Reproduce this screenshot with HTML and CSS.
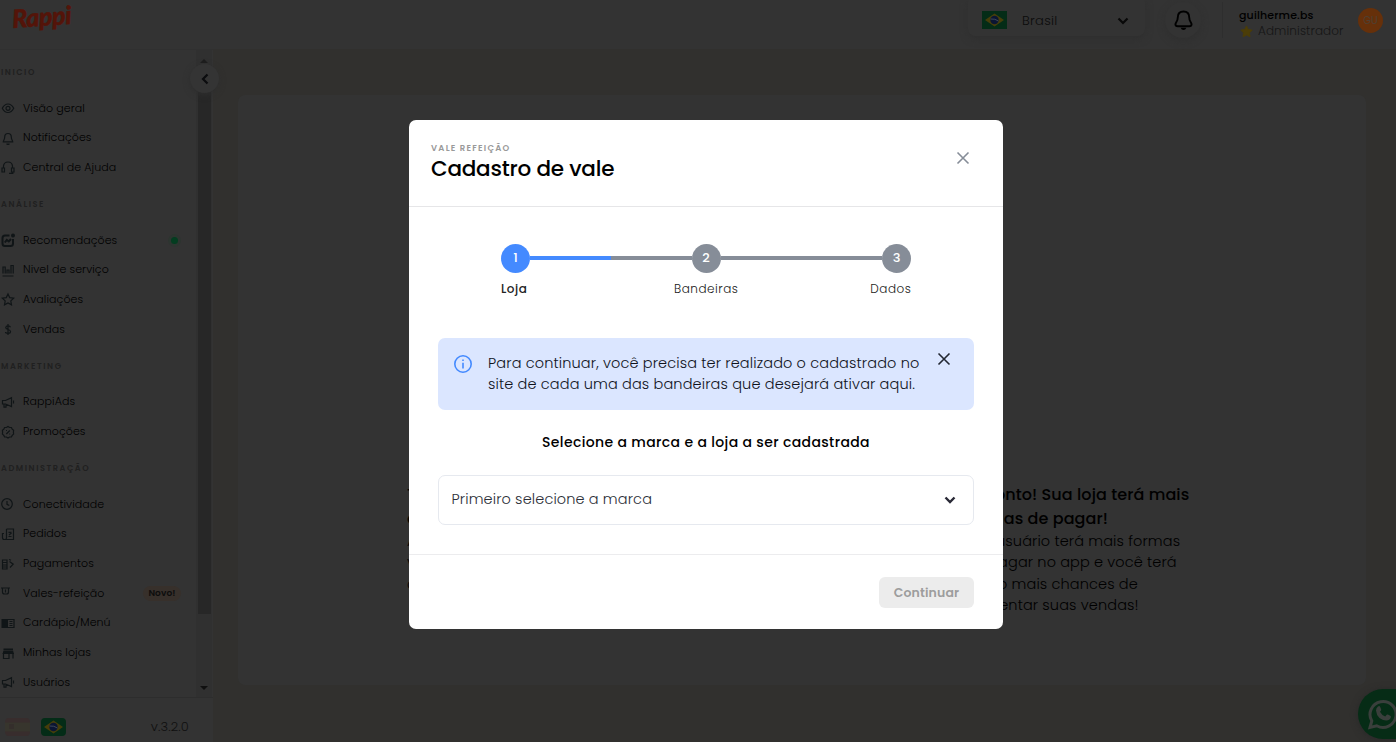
FILE: index.html
```html
<!DOCTYPE html>
<html lang="pt-BR">
<head>
<meta charset="utf-8">
<title>Cadastro de vale</title>
<link rel="stylesheet" href="styles.css">
</head>
<body>
<svg class="defs" aria-hidden="true">
  <symbol id="flag-br" viewBox="0 0 25 18"><rect width="25" height="18" fill="#042c17"/><path d="M12.500 2.500 22 9l-9.500 6.500L3 9z" fill="#463e0a"/><circle cx="12.500" cy="9" r="4.200" fill="#0b1533"/><path d="M8.600 8q4.500-.5 7.800 2" stroke="#3f4858" fill="none"/></symbol>
  <symbol id="mega" viewBox="0 0 14 14"><path d="M1.500 5.500h3L10.500 2.800v8.700L4.500 9h-3zM3 9.200v3h2v-2.500M12.500 5.500v3"/></symbol>
  <symbol id="bell" viewBox="0 0 14 14"><path d="M7 2.500c-2.200 0-3.300 1.500-3.300 3.500 0 3-1.400 3.300-1.400 4.800h9.400c0-1.500-1.400-1.800-1.400-4.800 0-2-1.100-3.500-3.300-3.500zM5.500 12.800q1.500 1.200 3 0"/></symbol>
  <symbol id="chev" viewBox="0 0 12 8"><path d="M1.500 1.500 6 6l4.500-4.500"/></symbol>
</svg>

<header class="topbar">
  <div class="logo">Rappi</div>
  <div class="country"><svg class="flag"><use href="#flag-br"/></svg><span>Brasil</span><svg class="chev"><use href="#chev"/></svg></div>
  <div class="bell"><svg viewBox="0 0 20 22"><path d="M10 1.500c-4 0-6 2.500-6 6 0 4.500-2.500 5.500-2.500 7.500 0 1.500 1 2 2.500 2h12c1.500 0 2.500-.5 2.500-2 0-2-2.500-3-2.500-7.500 0-3.500-2-6-6-6z"/><path class="solid" d="M7 18.500h6q-.8 2.500-3 2.500t-3-2.500z"/></svg></div>
  <div class="user">
    <div class="who"><b>guilherme.bs</b><span><svg class="star" viewBox="0 0 14 14"><path d="M7 1l1.900 3.900 4.200.6-3 3 .7 4.200L7 10.700l-3.800 2 .7-4.200-3-3 4.200-.6z"/></svg><em>Administrador</em></span></div>
    <div class="avatar">GU</div>
  </div>
</header>

<div class="shell">
  <aside class="side">
    <div class="scroll">
      <nav class="menu">
        <h4>INICIO</h4>
        <a><svg viewBox="0 0 14 14"><path d="M1.300 7.300q2.200-4.300 5.700-4.300t5.700 4.300q-2.200 4.200-5.700 4.200T1.300 7.300z"/><circle cx="7" cy="7.300" r="2"/></svg><span>Visão geral</span></a>
        <a><svg><use href="#bell"/></svg><span>Notificações</span></a>
        <a><svg viewBox="0 0 14 14"><path d="M2.500 7.500V6Q3 2 7 2t4.500 4v1.500M1 8h2.500v4H1zM10.500 8H13v4h-2.500zM11.800 12v1.300H8"/></svg><span>Central de Ajuda</span></a>
        <h4>ANÁLISE</h4>
        <a><svg class="heavy" viewBox="0 0 14 14"><path d="M8.500 2.500H4Q1.500 2.500 1.500 5v5.500Q1.500 13 4 13h5.500Q12 13 12 10.500V6M3.800 9.500l2-2.500 2 1.500L10 6"/><circle cx="12" cy="2.500" r="1"/></svg><span>Recomendações</span><i class="live"></i></a>
        <a><svg viewBox="0 0 14 14"><path d="M2 10.500V4h2.200v6.500M6 10.500V7h2v3.500M10 10.500V2.500h2.200v8M1.500 13h11"/></svg><span>Nivel de serviço</span></a>
        <a><svg viewBox="0 0 14 14"><path d="M7 2l1.700 3.600 4 .5-2.900 2.800.7 3.900L7 11l-3.500 1.800.7-3.900-2.900-2.800 4-.5z"/></svg><span>Avaliações</span></a>
        <a><svg viewBox="0 0 14 14"><path d="M9.500 5.300Q9 3.800 7 3.800T4.700 5.600q0 1.400 2.300 1.900t2.500 1.900q0 1.900-2.500 1.900T4.500 9.900M7 2v11"/></svg><span>Vendas</span></a>
        <h4>MARKETING</h4>
        <a><svg><use href="#mega"/></svg><span>RappiAds</span></a>
        <a><svg viewBox="0 0 14 14"><path d="M7 1.500l1.600 1 1.800 0 .8 1.600 1.400 1.200-.2 1.900.2 1.900-1.400 1.300-.8 1.600H8.600L7 13l-1.600-1H3.600l-.8-1.600-1.400-1.300.2-1.900-.2-1.900 1.400-1.200.8-1.600h1.800zM5.300 9l3.500-3.500M5 5.500h1M8.200 9h1"/></svg><span>Promoções</span></a>
        <h4>ADMINISTRAÇÃO</h4>
        <a><svg viewBox="0 0 14 14"><circle cx="6" cy="7" r="5.300"/><path d="M6 4v3.300l2.300 1.200"/></svg><span>Conectividade</span></a>
        <a><svg viewBox="0 0 14 14"><path d="M5.500 2h7v10.500H3.200q-1.700 0-1.700-2V6.500h1.500M5.500 2v9q0 1.500-1.500 1.500M7.500 5.300h3M7.500 9.500h3M8 8l2.500-2"/></svg><span>Pedidos</span></a>
        <a><svg viewBox="0 0 14 14"><path d="M1.500 3h4.500v9H1.500zM1.500 5.500H6M1.500 8H6M1.500 10H6M8.500 4.500 12.200 7.200 9 10.500M8 2.500l2 .8"/></svg><span>Pagamentos</span></a>
        <a><svg viewBox="0 0 14 14"><path d="M0 2h9M1.500 2v4q0 2 2 2h2q2 0 2-2V2M4.500 3.500v3"/></svg><span>Vales-refeição</span><i class="new">Novo!</i></a>
        <a><svg viewBox="0 0 14 14"><path class="solid" d="M.5 3h6.500v9H.5z"/><path d="M7 3.500h6v8H7M8.500 5.500h3M8.500 7.500h3M8.500 9.500h3"/></svg><span>Cardápio/Menú</span></a>
        <a><svg viewBox="0 0 14 14"><path class="solid" d="M2.500 2.500h9.500V4H2.500zM2.500 4.500H12l1 3.500H1.500z"/><path d="M2.500 7v5.500H8V7M12 7v5.500"/></svg><span>Minhas lojas</span></a>
        <a><svg><use href="#mega"/></svg><span>Usuários</span></a>
      </nav>
      <div class="bar"><i class="up"></i><i class="thumb"></i><i class="down"></i></div>
    </div>
    <div class="foot"><svg class="es" viewBox="0 0 25 18"><rect width="25" height="18" fill="#382d2d"/><rect y="4.500" width="25" height="9" fill="#37352d"/><rect x="4" y="6" width="5" height="5" fill="#342e2b"/></svg><svg class="br"><use href="#flag-br"/></svg><span>v.3.2.0</span></div>
    <div class="collapse"><svg viewBox="0 0 8 12"><path d="M6.500 1.500 2 6l4.500 4.500"/></svg></div>
  </aside>
  <main class="main">
    <section class="card">
      <div class="promo left"><strong>Tudo</strong><strong>certo</strong><span>Ative</span><span>vales</span><span>com</span></div>
      <div class="promo right"><strong>E pronto! Sua loja terá mais</strong><strong>formas de pagar!</strong><span>Seu usuário terá mais formas</span><span>de pagar no app e você terá</span><span>muito mais chances de</span><span>aumentar suas vendas!</span></div>
    </section>
  </main>
</div>

<div class="whats"><svg viewBox="0 0 32 32"><path d="M3 29.500 4.800 23A13 13 0 1 1 9.700 27.800z"/><path class="phone" d="M11 8.500q1.500-1 2.200.5l1 2.400q.3.800-1.200 2.300 1.800 3.500 5.200 4.700l1.500-1.700q.5-.5 1.200-.2l2.400 1.200q1 .5.500 1.800-1 3-4.500 3Q10 21.500 9 12.500q0-2.500 2-4z"/></svg></div>

<div class="layer">
  <div class="modal" role="dialog">
    <div class="head"><div><small>VALE REFEIÇÃO</small><h1>Cadastro de vale</h1></div><svg class="close" viewBox="0 0 14 14"><path d="M1.500 1.500l11 11M12.500 1.500l-11 11"/></svg></div>
    <div class="body">
      <div class="steps"><b class="on">1</b><i class="half"></i><b>2</b><i></i><b>3</b></div>
      <div class="labels"><span class="cur">Loja</span><span>Bandeiras</span><span>Dados</span></div>
      <div class="info">
        <svg class="ic" viewBox="0 0 20 20"><circle cx="10" cy="10" r="8.200"/><path d="M10 8.800v5.700M10 5.500v1.600"/></svg>
        <p>Para continuar, você precisa ter realizado o cadastrado no<br>site de cada uma das bandeiras que desejará ativar aqui.</p>
        <svg class="x" viewBox="0 0 14 14"><path d="M1.500 1.500l11 11M12.500 1.500l-11 11"/></svg>
      </div>
      <h2>Selecione a marca e a loja a ser cadastrada</h2>
      <div class="select"><span>Primeiro selecione a marca</span><svg class="chev"><use href="#chev"/></svg></div>
    </div>
    <div class="actions"><button disabled>Continuar</button></div>
  </div>
</div>
</body>
</html>
```
FILE: styles.css
```css
* { box-sizing: border-box; }
body { margin: 0; height: 742px; overflow: hidden; background: #31302e; font-family: Poppins, Inter, "Open Sans", sans-serif; font-weight: 300; color: #0b0c0e; }
svg { fill: none; stroke: currentColor; flex: none; }
.defs { position: absolute; width: 0; height: 0; }
.solid { fill: currentColor; stroke: none; }

.topbar { display: flex; height: 49px; background: #333; }
.logo { width: 968px; padding-left: 12px; color: #541409; font: italic 900 25px/32px Lato, sans-serif; letter-spacing: -.4px; -webkit-text-stroke: .5px #541409; transform: rotate(-4deg); transform-origin: 40px 18px; }
.country { display: flex; align-items: center; width: 177px; height: 41px; margin-top: -5px; padding: 10px 16px 0 14px; border-radius: 7px; background: #333; box-shadow: 0 3px 7px #2f2f2f; font-size: 13px; letter-spacing: .3px; color: #0c0c0c; }
.country .flag { width: 25px; height: 18px; margin-right: 15px; margin-top: -1px; stroke: none; }
.country .chev { width: 12px; height: 8px; margin-left: auto; stroke-width: 2.2; color: #080808; }
.bell { display: flex; width: 36px; height: 36px; margin: 2px 21px 0 20px; border-radius: 50%; align-items: center; justify-content: center; box-shadow: 0 3px 7px #2f2f2f; color: #000; }
.bell svg { width: 19px; height: 21px; stroke-width: 2; }
.user { display: flex; flex: 1; height: 36px; margin-top: 2px; padding: 5px 13px 0 16px; border-left: 1px solid #2e2e2e; justify-content: space-between; }
.who { display: flex; flex-direction: column; font-size: 11px; line-height: 16px; }
.who b { font-weight: 500; letter-spacing: .15px; color: #000; }
.who span { display: flex; align-items: center; gap: 5px; color: #161616; }
.who em { font-size: 12px; font-style: normal; letter-spacing: .1px; }
.star { width: 13px; height: 13px; margin-left: 1px; color: #4b3d08; fill: #4b3d08; }
.avatar { width: 25px; height: 25px; margin-top: 1px; border-radius: 50%; background: #66300a; color: #4d4034; font-size: 10px; font-weight: 400; line-height: 25px; text-align: center; }

.shell { display: flex; height: 693px; }
.side { position: relative; display: flex; flex-direction: column; width: 213px; background: #333; border-top: 1px solid #303030; }
.scroll { display: flex; height: 647px; }
.menu { width: 196px; overflow: hidden; }
.menu h4 { margin: 0; padding: 1px 0 0 1px; height: 43.2px; font-size: 8.200px; font-weight: 600; line-height: 43.2px; letter-spacing: 1.550px; color: #202020; }
.menu a { display: flex; align-items: center; height: 29.65px; padding-left: 1px; font-size: 11px; letter-spacing: .08px; color: #000; }
.menu svg { width: 14px; height: 14px; margin-right: 8px; stroke-width: 1.2; color: #101517; }
.menu svg.heavy { stroke-width: 2; }
.live { width: 13px; height: 13px; margin-left: auto; margin-right: 15px; border: 3px solid #2d3530; border-radius: 50%; background: #033d20; }
.new { width: 38px; margin: 0 15px 0 auto; border-radius: 8px; background: #37302b; font-style: normal; font-weight: 600; font-size: 9px; line-height: 15px; letter-spacing: .1px; text-align: center; color: #0d0d0d; }
.bar { display: flex; flex-direction: column; align-items: center; width: 16px; background: #303030; }
.up, .down { border: 4px solid transparent; }
.up { margin: 5px 0 0; border-bottom-color: #1c1c1c; }
.thumb { width: 13px; height: 530px; margin-top: 21px; background: #272727; }
.down { margin-top: 72px; border-top-color: #0f0f0f; }
.foot { display: flex; align-items: center; flex: 1; padding: 14px 24px 0 5px; border-top: 1px solid #2d2d2d; font-size: 13px; letter-spacing: .15px; color: #101010; }
.foot svg { width: 25px; height: 18px; margin-right: 11px; border-radius: 4px; stroke: none; }
.foot span { margin-left: auto; }
.collapse { position: absolute; left: 190px; top: 14px; display: flex; width: 29px; height: 29px; border-radius: 50%; align-items: center; justify-content: center; background: #343434; box-shadow: 0 2px 6px #2e2e2e; }
.collapse svg { width: 8px; height: 12px; stroke-width: 2.2; }
.main { flex: 1; padding: 46px 30px 57px 25px; }
.card { display: flex; height: 590px; padding-top: 388px; border-radius: 7px; background: #333; }
.promo { display: flex; flex-direction: column; color: #000; white-space: nowrap; font-size: 14.500px; line-height: 21.600px; letter-spacing: .13px; }
.promo strong { font-weight: 500; font-size: 16px; line-height: 23.800px; letter-spacing: .1px; color: #000; }
.left { width: 727px; padding-left: 169px; }

.whats { position: absolute; left: 1358px; top: 689px; width: 38px; height: 50px; overflow: hidden; border-radius: 25px 0 0 25px; background: #062c16; color: #3a3f3c; box-shadow: 0 1px 7px #282828; }
.whats svg { width: 32px; height: 32px; margin: 9px 0 0 9px; stroke-width: 3; }
.whats .phone { fill: currentColor; stroke: none; }

.layer { position: fixed; inset: 0; display: flex; justify-content: center; padding: 120px 0 0 16px; }
.modal { width: 594px; height: 509px; border-radius: 7px; background: #fff; }
.head { display: flex; justify-content: space-between; height: 87px; padding: 22px 33px 0 22px; border-bottom: 1px solid #e6e6e8; }
.head small { display: block; font-size: 8.500px; font-weight: 600; line-height: 12px; letter-spacing: 1.250px; color: #999; }
.head h1 { margin: 0; font-size: 21.500px; font-weight: 500; line-height: 30px; letter-spacing: -.22px; color: #000; }
.close { width: 14px; height: 14px; margin-top: 9px; stroke-width: 1.600; color: #868d98; }
.body { height: 347px; padding: 37px 29px 0; }
.steps { display: flex; margin: 0 63px; }
.steps b { width: 29px; height: 29px; border-radius: 50%; background: #868d98; color: #fff; font-size: 13px; font-weight: 500; line-height: 28px; text-align: center; }
.steps .on { background: #448aff; }
.steps i { flex: 1; height: 4px; margin-top: 12px; background: #868d98; }
.steps .half { background: linear-gradient(90deg, #448aff 50%, #868d98 50%); }
.labels { display: grid; grid-template-columns: 1fr 1fr 1fr; margin: 6px 62.500px 0 63px; font-size: 12px; line-height: 20px; letter-spacing: .53px; color: #1a1a1a; text-align: center; }
.labels .cur { font-weight: 500; letter-spacing: .5px; text-align: left; color: #222; }
.labels span:last-child { text-align: right; }
.info { display: flex; height: 72px; margin-top: 39px; padding: 15px 22px 0 15px; border-radius: 7px; background: #dbe6ff; color: #10131c; }
.info p { width: 448px; margin: 0 0 0 15px; font-size: 14.500px; line-height: 21px; letter-spacing: .14px; white-space: nowrap; }
.ic { width: 20px; height: 20px; margin-top: 1px; color: #448aff; stroke-width: 1.600; }
.x { width: 14px; height: 14px; margin: -1px 0 0 1px; color: #222732; stroke-width: 1.600; }
.body h2 { margin: 21px 0; font-size: 14px; font-weight: 500; line-height: 23px; letter-spacing: .36px; text-align: center; color: #000; }
.select { display: flex; align-items: center; justify-content: space-between; height: 50px; padding: 0 17px 2px 12.500px; border: 1px solid #e6e9ef; border-radius: 7px; font-size: 14.500px; letter-spacing: .13px; color: #2c2f38; }
.select .chev { width: 12px; height: 8px; margin-top: 2px; stroke-width: 2.4; color: #292936; }
.actions { display: flex; justify-content: flex-end; padding: 22px 29px 0 0; height: 75px; border-top: 1px solid #ececee; }
.actions button { width: 95px; height: 31px; padding: 0; border: 0; border-radius: 6px; background: #ececec; color: #9d9d9d; font: 600 12.500px Poppins, Inter, sans-serif; letter-spacing: .15px; }
```
